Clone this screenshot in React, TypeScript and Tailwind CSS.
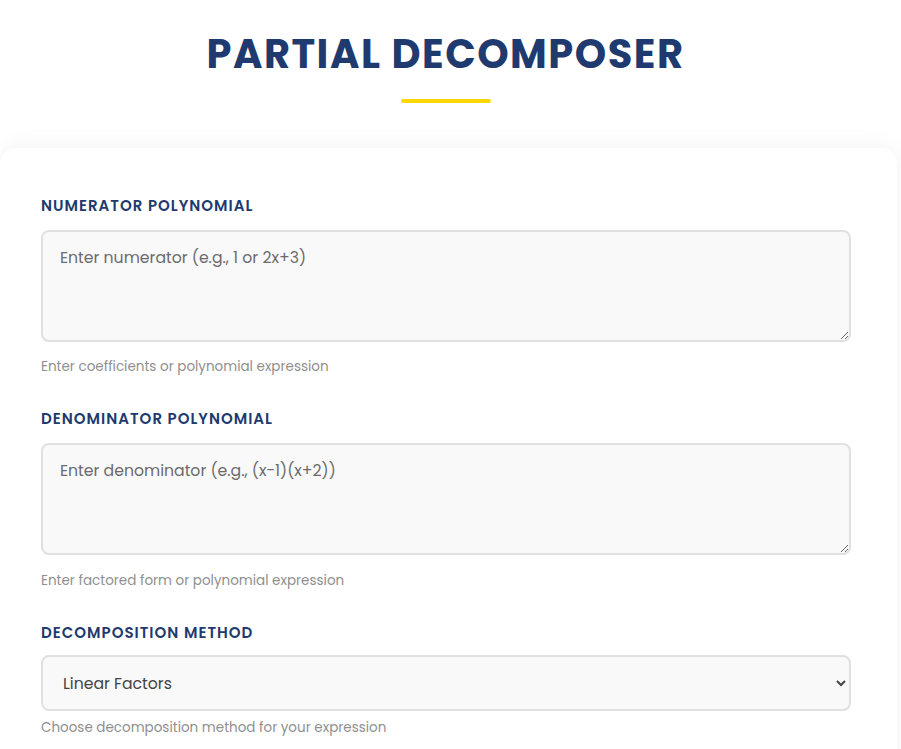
import React from 'react';

const FONT = "font-['Poppins','Inter','Noto_Sans',sans-serif]";

function Field({
  label,
  hint,
  labelGap,
  hintGap,
  children,
}: {
  label: string;
  hint: string;
  labelGap: string;
  hintGap: string;
  children: React.ReactNode;
}) {
  return (
    <div className="flex flex-col">
      <label
        className={`text-[15px] leading-[22px] font-semibold tracking-[1px] text-[#1e3a6e] uppercase ${labelGap}`}
      >
        {label}
      </label>
      {children}
      <p className={`${hintGap} text-[13.5px] leading-[20px] text-[#8f8f8f]`}>{hint}</p>
    </div>
  );
}

const boxCls =
  'w-full rounded-lg border-2 border-[#e0e0e0] bg-[#f9f9f9] text-[15.7px] text-[#444] outline-none';

export default function App() {
  return (
    <div className={`${FONT} min-h-[749px] bg-white overflow-hidden`}>
      <header className="flex w-[891px] flex-col items-center pt-[28px]">
        <h1 className="text-[40px] leading-[52px] font-bold tracking-[1.5px] text-[#1e3a6e]">
          PARTIAL DECOMPOSER
        </h1>
        <div className="mt-[19px] h-[4px] w-[90px] rounded-full bg-[#ffd700]" />
      </header>

      <main className="mt-[45px] w-[897px] rounded-2xl bg-white pl-[41px] pr-[46px] pt-[47px] pb-10 shadow-[0_0_24px_rgba(0,0,0,0.06)]">
        <div className="flex flex-col gap-[31px]">
          <Field
            label="Numerator Polynomial"
            hint="Enter coefficients or polynomial expression"
            labelGap="mb-[13px]"
            hintGap="mt-[15px]"
          >
            <textarea
              placeholder="Enter numerator (e.g., 1 or 2x+3)"
              className={`${boxCls} h-[112px] resize-y px-[17px] py-[14px] leading-[24px] placeholder:text-[#6b6b6b]`}
            />
          </Field>
          <Field
            label="Denominator Polynomial"
            hint="Enter factored form or polynomial expression"
            labelGap="mb-[13px]"
            hintGap="mt-[16px]"
          >
            <textarea
              placeholder="Enter denominator (e.g., (x-1)(x+2))"
              className={`${boxCls} h-[112px] resize-y px-[17px] py-[14px] leading-[24px] placeholder:text-[#6b6b6b]`}
            />
          </Field>
          <Field
            label="Decomposition Method"
            hint="Choose decomposition method for your expression"
            labelGap="mb-[11px]"
            hintGap="mt-[7px]"
          >
            <select defaultValue="linear" className={`${boxCls} h-[56px] px-[16px]`}>
              <option value="linear">Linear Factors</option>
              <option value="repeated">Repeated Factors</option>
              <option value="quadratic">Irreducible Quadratic</option>
            </select>
          </Field>
        </div>
      </main>
    </div>
  );
}
